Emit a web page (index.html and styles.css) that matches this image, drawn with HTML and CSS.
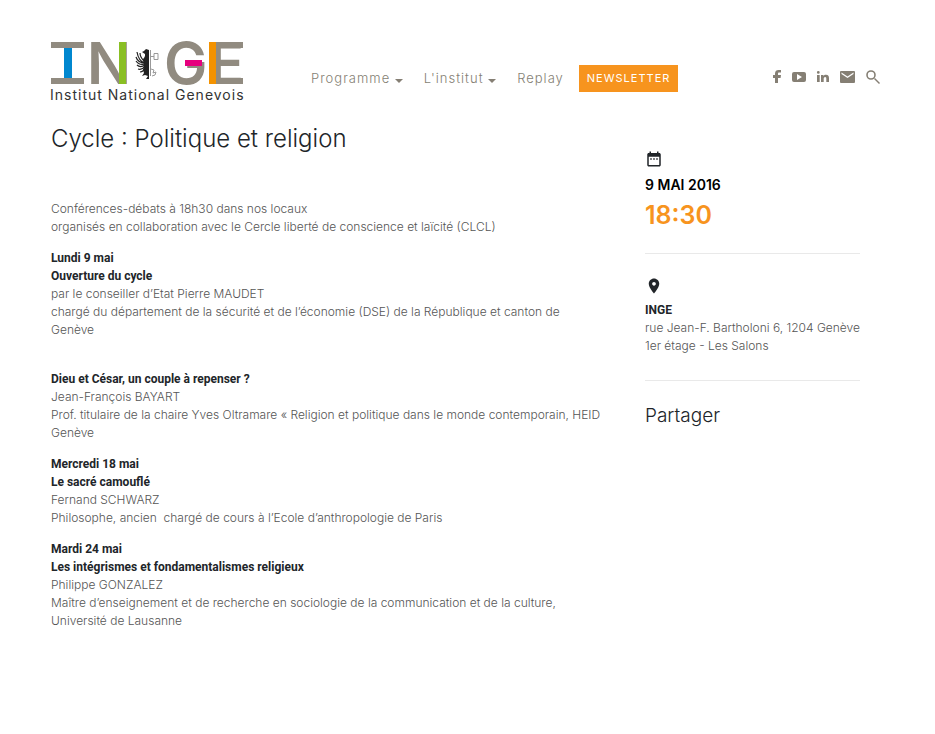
FILE: index.html
```html
<!DOCTYPE html>
<html lang="fr">
<head>
<meta charset="utf-8">
<meta name="viewport" content="width=device-width, initial-scale=1">
<title>Cycle : Politique et religion</title>
<link rel="stylesheet" href="styles.css">
</head>
<body>
<header class="header">
  <a class="logo" href="#" aria-label="Institut National Genevois">
    <svg width="194" height="64" viewBox="0 0 194 64">
      <g class="logo-letters">
        <text x="9" y="43">I</text>
        <text x="36" y="43">N</text>
        <text x="113" y="43">G</text>
        <text x="158" y="43">E</text>
      </g>
      <path fill="#918b80" d="M0 1h33v6H0zM0 37h33v6H0zM165 1h27v6h-27zM165 37h27v6h-27z"/>
      <path fill="#0087cf" d="M13 7h8v30h-8z"/>
      <path fill="#8abf24" d="M68 1h7v42h-7z"/>
      <path fill="#e6007e" d="M134 19h17v6h-17z"/>
      <path fill="#f39200" d="M158 1h7v42h-7z"/>
      <path fill="#222" d="M98 9l-3-1-2 2-2 1 3 2v2l-1 2-1 1 1 8-1 3 1 3-2 3 3-1 3 1-2 3h3z"/>
      <path fill="none" stroke="#222" stroke-width="1.200" d="M94 22c-4-1-7-5-8-11M94 22c-5 0-8-3-9-6M94 23c-4 1-7 0-9-3M94 24c-3 2-6 2-8 0M94 25c-2 3-4 4-7 3M94 26c-1 4-3 5-5 5M93 20c-2-2-4-5-4-8"/>
      <path fill="none" stroke="#999" stroke-width="1" d="M99.500 9v26M100 15.500h3M103 12.500h4v6h-4zM100 28l3 1-1 3 3-1-1 3-3 1"/>
      <text class="logo-name" x="-1" y="59">Institut National Genevois</text>
    </svg>
  </a>
  <nav class="nav">
    <a href="#">Programme <span class="caret"></span></a>
    <a href="#">L'institut <span class="caret"></span></a>
    <a href="#">Replay</a>
    <a class="newsletter" href="#">NEWSLETTER</a>
  </nav>
  <div class="social">
    <a href="#" aria-label="Facebook"><svg width="8" height="14" viewBox="0 0 8 14"><path d="M2 13V8H0V5h2V3.500C2 1 3.500 0 5.500 0H8v2.500H6.300C5.300 2.500 5 3 5 3.700V5h3l-.4 3H5v5z"/></svg></a>
    <a href="#" aria-label="YouTube"><svg width="14" height="10" viewBox="0 0 14 10"><path fill-rule="evenodd" d="M2 0h10q2 0 2 2v6q0 2-2 2H2Q0 10 0 8V2Q0 0 2 0zM5 2v6l5-3z"/></svg></a>
    <a href="#" aria-label="LinkedIn"><svg width="12" height="12" viewBox="0 0 12 12"><path d="M0 4h2.700v7H0zM1.300 0a1.400 1.400 0 1 1 0 2.800 1.400 1.400 0 0 1 0-2.800zM4 4h2.400v1C7 4.200 7.800 3.800 9 3.800c2.400 0 3 1.400 3 3.400V11H9.300V8c0-1.100-.1-2-1.200-2S6.700 7 6.700 8v3H4z"/></svg></a>
    <a href="#" aria-label="E-mail"><svg width="15" height="12" viewBox="0 0 15 12"><path fill-rule="evenodd" d="M1 0h13q1 0 1 1v10q0 1-1 1H1q-1 0-1-1V1q0-1 1-1zM1.500 1.500V3l6 4 6-4V1.500l-6 4z"/></svg></a>
    <button type="button" aria-label="Rechercher"><svg width="14" height="14" viewBox="0 0 14 14"><circle cx="5" cy="5" r="4" fill="none" stroke="currentColor" stroke-width="1.600"/><path d="M8 9l1-1 5 5-1 1z"/></svg></button>
  </div>
</header>
<main class="layout">
  <article class="article">
    <h1>Cycle : Politique et religion</h1>
    <p>Conférences-débats à 18h30 dans nos locaux<br>organisés en collaboration avec le Cercle liberté de conscience et laïcité (CLCL)</p>
    <p><strong>Lundi 9 mai<br>Ouverture du cycle</strong><br>par le conseiller d’Etat Pierre MAUDET<br>chargé du département de la sécurité et de l’économie (DSE) de la République et canton de Genève</p>
    <p><br><strong>Dieu et César, un couple à repenser ?</strong><br>Jean-François BAYART<br>Prof. titulaire de la chaire Yves Oltramare « Religion et politique dans le monde contemporain, HEID Genève</p>
    <p><strong>Mercredi 18 mai<br>Le sacré camouflé</strong><br>Fernand SCHWARZ<br>Philosophe, ancien&nbsp; chargé de cours à l’Ecole d’anthropologie de Paris</p>
    <p><strong>Mardi 24 mai<br>Les intégrismes et fondamentalismes religieux</strong><br>Philippe GONZALEZ<br>Maître d’enseignement et de recherche en sociologie de la communication et de la culture, Université de Lausanne</p>
  </article>
  <aside class="aside">
    <section>
      <svg width="18" height="18" viewBox="0 0 24 24"><path d="M9 11H7v2h2v-2zm4 0h-2v2h2v-2zm4 0h-2v2h2v-2zm2-7h-1V2h-2v2H8V2H6v2H5c-1.110 0-1.990.9-1.990 2L3 20c0 1.100.89 2 2 2h14c1.100 0 2-.9 2-2V6c0-1.100-.9-2-2-2zm0 16H5V9h14v11z"/></svg>
      <div class="date">9 MAI 2016</div>
      <div class="time">18:30</div>
    </section>
    <section>
      <svg width="18" height="18" viewBox="0 0 24 24"><path d="M12 2C8.130 2 5 5.130 5 9c0 5.250 7 13 7 13s7-7.750 7-13c0-3.870-3.130-7-7-7zm0 9.500c-1.380 0-2.500-1.120-2.500-2.500s1.120-2.500 2.500-2.500 2.500 1.120 2.500 2.500-1.120 2.500-2.500 2.500z"/></svg>
      <p class="place"><strong>INGE</strong><br>rue Jean-F. Bartholoni 6, 1204 Genève<br>1er étage - Les Salons</p>
    </section>
    <h2>Partager</h2>
  </aside>
</main>
</body>
</html>
```

FILE: styles.css
```css
* { box-sizing: border-box; }
body {
  margin: 0;
  padding: 41px 51px;
  background: #fff;
  color: #212529;
  font: 300 12px/18px Inter, "Liberation Sans", sans-serif;
}
a { color: inherit; text-decoration: none; }
svg { display: block; overflow: visible; fill: currentColor; }
.header { display: flex; align-items: flex-start; color: #857f74; }
.logo-letters { font: 600 58px Inter, sans-serif; fill: #918b80; }
.logo-name { font: 400 14px Inter, sans-serif; letter-spacing: 1px; fill: #333; }
.nav {
  display: flex;
  align-items: center;
  gap: 21px;
  margin: 24px auto 0 66px;
  font: 300 13px/27px Inter, sans-serif;
  letter-spacing: 1px;
  white-space: nowrap;
}
.caret {
  display: inline-block;
  border: 4px solid transparent;
  border-top-color: currentColor;
  border-bottom: 0;
}
.newsletter {
  margin-left: -6px;
  padding: 0 8px;
  background: #f7941e;
  color: #fff;
  font-size: 11px;
  font-weight: 400;
}
.social { display: flex; align-items: center; gap: 11px; margin: 29px 4px 0 0; }
.social button { padding: 0; border: 0; background: none; color: inherit; }
.layout {
  display: grid;
  grid-template-columns: minmax(0, 1fr) 215px;
  gap: 42px;
  padding-right: 24px;
}
h1, h2 { margin: 0; font-weight: 300; }
h1 { margin: 18px 0 45px; font-size: 24px; line-height: 32px; }
h2 { font-size: 19px; line-height: 24px; }
p { margin: 0 0 13px; color: #555; }
strong { color: #212529; font-family: Roboto, sans-serif; font-weight: 700; }
.aside { padding-top: 45px; }
.aside section { margin-bottom: 23px; padding-bottom: 22px; border-bottom: 1px solid #e9e9e9; }
.aside section + section { padding-bottom: 25px; }
.date { margin-top: 8px; color: #000; font-size: 14px; font-weight: 600; }
.time { margin-top: 5px; color: #f7941e; font-size: 25px; font-weight: 600; line-height: 32px; }
.place { margin: 6px 0 0; }
```
